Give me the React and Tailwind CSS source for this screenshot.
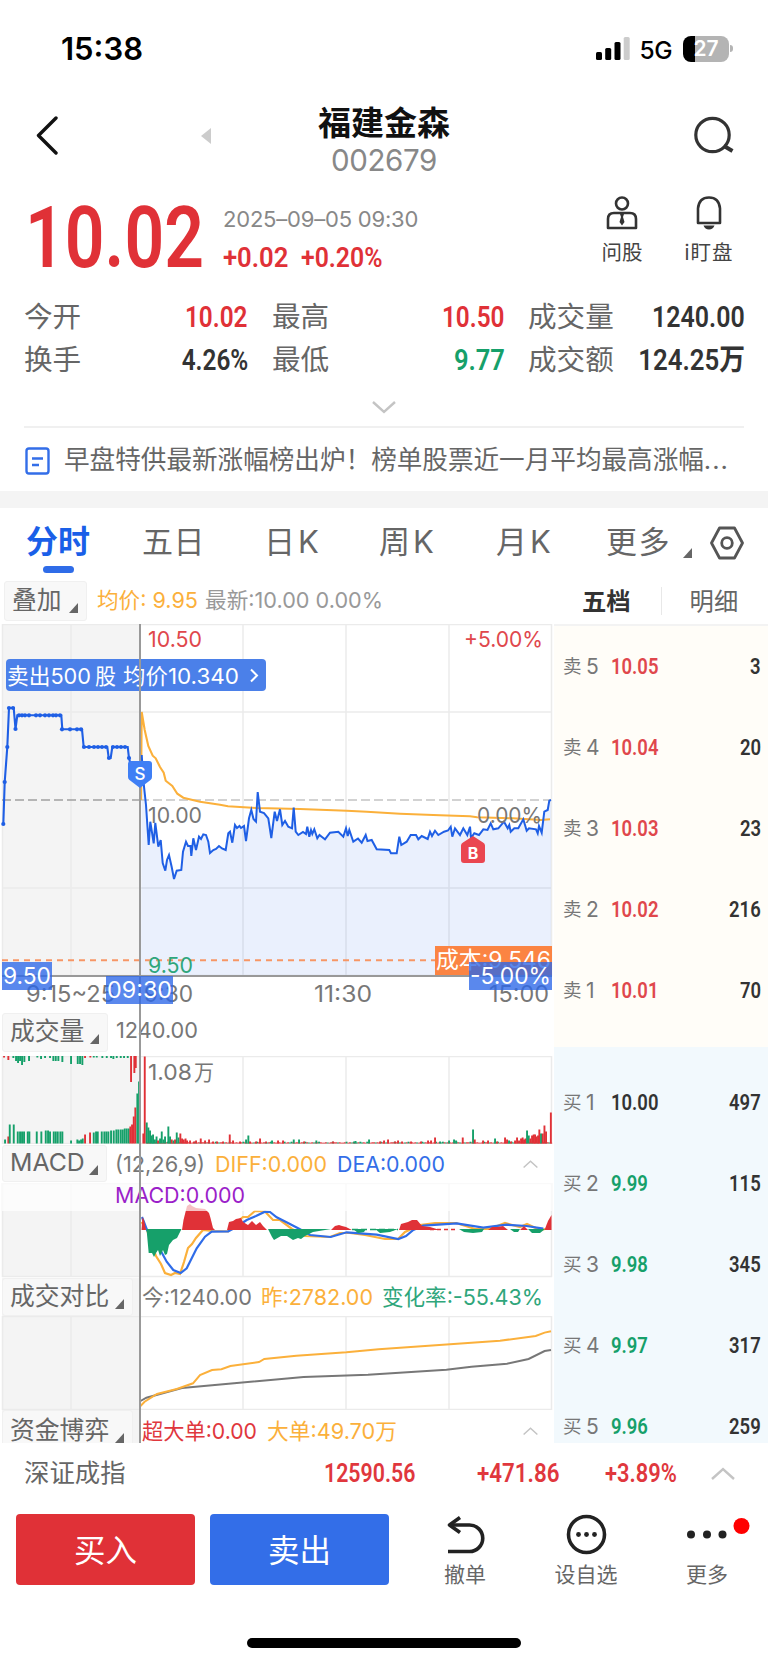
import { clsx } from "clsx";

const stats = [
  [
    { label: "今开", value: "10.02", tone: "text-[#e03137]" },
    { label: "最高", value: "10.50", tone: "text-[#e03137]" },
    { label: "成交量", value: "1240.00", tone: "text-[#333] scale-x-[.86]" },
  ],
  [
    { label: "换手", value: "4.26%", tone: "text-[#333]" },
    { label: "最低", value: "9.77", tone: "text-[#16a06a] scale-x-[.88]" },
    { label: "成交额", value: "124.25万", tone: "text-[#333] scale-x-[.89]" },
  ],
];

const sells = [
  ["5", "10.05", "3"],
  ["4", "10.04", "20"],
  ["3", "10.03", "23"],
  ["2", "10.02", "216"],
  ["1", "10.01", "70"],
];

const buys = [
  ["1", "10.00", "497", "text-[#333]"],
  ["2", "9.99", "115", "text-[#16a06a]"],
  ["3", "9.98", "345", "text-[#16a06a]"],
  ["4", "9.97", "317", "text-[#16a06a]"],
  ["5", "9.96", "259", "text-[#16a06a]"],
];

const auctionLine =
  "3.3,824.5 4.7,782 7.3,747 9,708 13.7,708 15.5,729 17.3,715.3 61.3,715.3 62.3,729.3 82,729.3 83.7,747 107.3,747 108.7,758 110.7,758 112.3,747 127.7,747 129,758 132,770";

const auctionDots = [
  [3.3, 824], [4.7, 782], [7.3, 747], [9, 708], [13, 708], [15.5, 729], [19, 715.3], [22, 715.3], [25, 715.3],
  [29, 715.3], [36, 715.3], [40, 715.3], [45, 715.3], [49, 715.3], [53, 715.3], [56, 715.3], [60, 715.3],
  [62, 729.3], [70, 729.3], [77, 729.3], [81, 729.3], [84, 747], [89, 747], [94, 747], [98, 747], [102, 747],
  [106, 747], [109, 758], [113, 747], [117, 747], [121, 747], [125, 747], [129, 758],
];

const priceLine =
  "141.7,755 144,786.7 146,805 148.7,845 150.3,821.7 153.7,843.3 155.3,823 158.3,846.7 160.7,840 162.7,863 165.3,870.7 167,860 169,855 171.7,867 174,879 176.7,870.7 181.3,870 183,851.7 186,841.7 188,846 190.5,846 191.3,856 193.3,838.3 196,850 199,836.7 201,839 203.3,834.3 206,835 208.3,841.7 210,853 213.3,850 216,849 219,846 222,848.5 225.7,850 228.3,833.3 230,831.7 232.3,842.7 235,825 237,828 239.5,826 241,828 244,826 246,841 249,818.3 251.3,810 253.5,819 256,821.7 257.7,792 260,811.7 264,813 268.3,818.3 271.3,838 274.7,811.7 277,821 280,809.3 282.3,825 285,821 288.3,826.7 292,828.3 293.7,807.5 295.7,831.7 298.3,835 303,832 306,834 307.3,826.7 309.3,836.7 311,830 312.3,834 314.3,829.3 317.3,838.3 319.5,835 322,837 325,839.3 330,832.7 338.3,831.7 343.3,836.7 346,828.3 347.7,836 349.3,830 353.3,841.7 358,838.5 361.7,842.7 365.7,835 367.5,841 371.7,840 376.7,849.3 389.3,850 391,853.3 396.7,853.3 399.3,836.7 401.3,845 406.7,841.7 410.7,835 416,835 418.3,839.3 421.7,836 427.7,839 430,831.7 432,836 435,830.7 438.3,835 444,831.7 448,830.5 450.7,826.7 452.3,836.7 455,828.3 460,835 463.3,828.3 467.3,835 470,826.7 471,838 474.3,833.3 479,835 483.3,829.3 487.5,830 490.7,823.3 493.3,829.3 498.3,828.3 504,821.7 507.7,828.3 509.3,825 510.7,831.7 514.3,828.3 518.3,828.3 523.3,819.3 526.7,830.7 529,828.3 536,829.3 537.7,833.3 539,826 541.7,832.7 544.3,811.7 547.7,810 549.3,800.7 551,800";

const averageLine =
  "141,800 141.7,712 144.7,730 148.3,746 152.7,755.7 155.7,758.3 160,767 163.7,772.7 165.7,780.7 172.3,786 177.3,793.7 183.3,797.7 200,801.7 220,804.7 228,806.3 257,808 300,809 346.7,810.7 366.7,811.7 400,813.7 440,815.3 470,816.3 477,817.3 513,818.3 541,820 550,819.3";

// [x, height], a negative height is a green bar
const auctionBottom = [
  [5, -4], [8.3, 7], [9.7, -19], [13.7, -19], [17.7, -12], [20, -12], [22, -12], [24, -12], [27.7, -12], [29.3, -12],
  [36.7, -12], [41.3, -12], [45.7, -13], [48, -13], [50, -12], [53.7, -12], [55.7, -12], [57.7, -12], [60.3, -12],
  [62.3, -12], [71, -3], [77.3, -4], [79, -3], [81, -4], [82.7, -5], [85, 9], [90, 11], [93.7, -11], [96, -12],
  [97.7, -12], [101.7, -12], [104.3, -12], [106.3, -12], [108.3, -12], [111, -13], [113.7, -13], [116.3, -14],
  [118.3, -14], [120.7, -14], [122.7, -14], [124.7, -15], [126.7, -15], [128.7, -15], [130.3, 17], [132, 19],
  [133.7, 27], [135.3, 36], [137.3, -50], [139, -62],
];

const auctionTop = [
  [4, 1.5], [8.3, 4], [13.3, -2], [16, -5], [18, -7], [20, -5], [22, -9], [24.3, -6], [29, -5], [37.3, -1.5], [41, -3],
  [45, -2], [50, -2], [53.3, -5], [55.7, -5], [58.3, -5], [62.3, -6], [71, -8], [77.7, -8], [80, -8], [82.3, -9],
  [85, 2], [90.3, 1.5], [93.7, -1.5], [96.7, -1.5], [102.3, -2], [106.7, -2], [111, -2], [113.3, -3], [116.7, -2],
  [120.7, -2], [124, -2], [127.7, -2], [131, 26], [134.3, 17], [135.7, 12],
];

const sessionBars = [
  [143.3, 10], [144.7, 87], [146.7, -21], [148.3, -16], [150, -13], [151.5, -8], [153, -9], [154.8, -4], [156.5, -7],
  [158, 3], [160, -5], [161.7, -12], [163.4, -4], [165, -7], [168.3, -17], [170, -7], [171.7, 4], [173.5, -3],
  [175, 4], [176.7, -11], [178.5, -6], [180.3, 10], [182, 5], [183.7, 4], [185.5, 5], [187, 3], [190, 3], [194, 2],
  [196, 3], [200.7, 5], [205, 3], [209, 4], [213, 2], [217, 2], [223, 2], [229.7, 9], [233, 3], [240, 2], [246, -4],
  [248.3, -8], [250, 2], [256, 2], [260, 5], [266, 2], [272, -3], [278, 3], [283, 3], [293.7, -4], [299, -4], [304, 2],
  [316.3, -3], [333, 2], [354, -2], [355.5, -2.5], [369, -4], [380, 2], [384, 3], [388, 4], [395, 2], [398, 3],
  [402, 2], [411, 2], [421, 2], [428, 3], [431, 3], [435, 6], [440, -2], [449, -3], [454, -4], [456, -3], [462.7, 6],
  [473, -14], [474.7, 4], [483, 3], [488, 3], [495, -5], [497, 2], [505, 6], [507, 4], [509, -3], [511, 2], [515, 3],
  [517, 6], [519, 3], [521, 5], [522.6, 6], [524, 4], [525.5, 5], [527, -13], [528.7, -8], [530.3, 5], [532, 8],
  [533.6, 9], [535, 9], [536.6, 7], [538, 8], [539.3, 14], [541, -10], [542.7, 10], [544.4, 18], [546, 12], [550.8, 31],
];

const macdUp = [
  "141.5,1230 142.5,1217 144,1220 146,1230",
  "182,1230 183.5,1220 186,1210 187,1206 190,1204 192,1206 196,1208 205,1209 209,1213 210.5,1218 213,1228 215,1230",
  "227,1230 229,1222 233,1221 236,1219 241,1218 243,1222 248,1225 252,1221 256,1225 260,1222 263,1226 267,1230",
  "331,1230 335,1226 339,1225 342,1226 346,1227 352,1230",
  "399,1230 401,1224 408,1222 412,1220 417,1220 422,1226 430,1227 440,1230",
  "488,1230 492,1227 498,1227 503,1226 508,1230",
  "520,1230 524,1226 528,1230",
  "544.5,1230 548,1221 551.5,1215 551.5,1230",
];

const macdDown = [
  "146.500,1229 148.7,1253 152,1253 154,1257 156,1253 158,1250 160,1256 163,1250 165,1255 167,1254 169,1245 173,1240 177,1238 181.500,1229",
  "268,1229 272,1237 274,1240 281,1236 287,1236 293,1240 298,1238 301,1239 305,1236 313,1232 331,1229",
  "353,1229 358,1233 364,1232 366,1229",
  "375,1229 380,1233 390,1232 398,1229",
  "459,1229 464,1232 473,1233 482,1232 484,1229",
  "510,1229 514,1232 518,1232 520,1229",
  "528,1229 532,1233 540,1233 545,1229",
];

const diffLine =
  "141.5,1222 147,1230 156,1256 161,1264 165,1273 171,1275 175,1273 180,1274 184,1262 188,1248 192,1244 196,1238 203,1230 212,1231 228,1231.5 232,1226 243,1217 248,1217 255,1211 265,1211.5 273,1220 280,1220 292,1229 305,1236 330,1237 340,1233 350,1233 365,1235 385,1239 398,1239 405,1232 420,1225 435,1223 456,1223 475,1229 490,1229 505,1223 520,1227 527,1224 540,1230 545,1229";

const deaLine =
  "142,1217 147,1230 161.3,1251.7 166.7,1261.7 173.3,1270 180.7,1273 186.7,1268.3 196.7,1248.3 205,1236.7 211.7,1231.7 228.3,1231.3 236.7,1226.7 246.7,1220 256,1216 265,1211.7 270,1212 276.7,1217.3 288,1223 300,1229.3 310,1235 330.7,1237 346.7,1232.3 376.7,1234.7 398.3,1239 406,1236 413.3,1230 423.3,1225.7 456.7,1223.3 483.3,1227.7 506.7,1224.7 526.7,1226 543.3,1228.7";

const yesterdayLine =
  "140.5,1406 144.6,1401.7 157,1394 176.8,1389 193,1383.3 200,1375 212,1370 221.4,1369.3 230.4,1366 259,1362 264.3,1359 296.4,1355.7 346.4,1352.3 378.6,1349.3 428.6,1345.7 500,1340.7 535.7,1336 544.6,1332.6 551,1331.3";

const todayLine =
  "140.5,1401 146.4,1397.7 182,1388 228.6,1383.7 303.6,1377 368,1374.7 446.4,1369.7 471.4,1366.7 507,1363.7 528.6,1359 544.6,1351 551,1350";

// narrow DIN-like numerals
function Num({ children, className, right }) {
  return (
    <span
      className={clsx(
        "inline-block font-['Roboto','Noto_Sans_CJK_SC',sans-serif] font-semibold whitespace-nowrap",
        right ? "origin-right" : "origin-left",
        !className?.includes("scale-x-") && "scale-x-[.84]",
        className
      )}
    >
      {children}
    </span>
  );
}

function Corner({ className }) {
  return (
    <svg className={clsx("h-[10px] w-[9px] shrink-0", className)} viewBox="0 0 9 10">
      <path d="M9 0V10H0Z" fill="#666" />
    </svg>
  );
}

function ChevronUp({ className }) {
  return (
    <svg className={className} viewBox="0 0 24 12" fill="none" stroke="#c4c4c4" strokeWidth="2.4">
      <path d="M1 11.5 12 1.5 23 11.5" />
    </svg>
  );
}

function ChartText({ x, y, w, fill, size = 22, children }) {
  return (
    <text x={x} y={y} fill={fill} fontSize={size} textLength={w} lengthAdjust="spacingAndGlyphs">
      {children}
    </text>
  );
}

function Grid({ top, bottom, rows = [] }) {
  return (
    <g stroke="#ebebeb" strokeWidth="1.5" fill="none">
      <rect x="2" y={top} width="138" height={bottom - top} fill="#f4f4f4" stroke="none" />
      {[2.5, 71, 243, 346, 449, 551.5].map((x) => (
        <path key={x} d={`M${x} ${top}V${bottom}`} />
      ))}
      {[top + 0.5, ...rows, bottom - 0.5].map((y) => (
        <path key={y} d={`M2 ${y}H552`} />
      ))}
    </g>
  );
}

function Legend({ children, className, w }) {
  return (
    <svg className={clsx("h-[34px] shrink-0 overflow-visible", className)} width={w} height="34">
      <text y="25" fontSize="22" fill="currentColor" textLength={w} lengthAdjust="spacingAndGlyphs">
        {children}
      </text>
    </svg>
  );
}

function StatusBar() {
  return (
    <div className="flex h-[96px] items-center pl-[61px] pr-[35px]">
      <span className="mt-0.5 text-[31px] font-semibold text-black">15:38</span>
      <svg className="ml-auto mt-px h-[23px] w-[34px]" viewBox="0 0 34 23">
        <rect x="0" y="15" width="6" height="8" rx="1.5" />
        <rect x="9.2" y="11" width="6" height="12" rx="1.5" />
        <rect x="18.5" y="5" width="6" height="18" rx="1.5" />
        <rect x="27.7" y="0" width="6" height="23" rx="1.5" fill="#ccc" />
      </svg>
      <span className="ml-[10px] mt-1 text-[24.5px] font-medium tracking-[-0.5px] text-black">5G</span>
      <div className="ml-[11px] mt-px flex h-[26px] w-[46px] items-center justify-center rounded-[8px] bg-linear-to-r from-black from-27% to-[#b4b4b4] to-27% text-[21px] font-semibold text-white">
        27
      </div>
      <div className="ml-px h-[7px] w-[3px] rounded-r-full bg-[#b4b4b4]" />
    </div>
  );
}

function Header() {
  return (
    <header className="flex h-[88px] items-start pl-[36px] pr-[33px]">
      <svg className="mt-[20px] h-[40px] w-[22px]" viewBox="0 0 22 40" fill="none" stroke="#111" strokeWidth="3.4" strokeLinecap="round" strokeLinejoin="round">
        <path d="M20 2 2.5 19.5 20 37" />
      </svg>
      <svg className="ml-[143px] mt-[32px] h-[16px] w-[10px]" viewBox="0 0 10 16">
        <path d="M10 0V16L0 8Z" fill="#ccc" />
      </svg>
      <div className="ml-[107px] flex w-[132px] flex-col items-center">
        <h1 className="mt-[7px] text-[33px] leading-[40px] font-semibold whitespace-nowrap text-[#111]">福建金森</h1>
        <p className="-mt-px text-[29.5px] leading-[36px] tracking-[-0.4px] text-[#888]">002679</p>
      </div>
      <svg className="ml-auto mt-[19px] h-[40px] w-[42px]" viewBox="0 0 42 40" fill="none" stroke="#333" strokeWidth="3.2">
        <circle cx="19.5" cy="20" r="16.7" />
        <path d="M31 31 39.5 36" strokeWidth="4" />
      </svg>
    </header>
  );
}

function Quote() {
  return (
    <section className="flex h-[93px] pl-[25px] pr-[29px]">
      <div className="w-[198px]">
        <Num className="mt-[10px] scale-x-[.81] text-[86px] leading-[88px] text-[#e03137]">10.02</Num>
      </div>
      <div className="flex w-[370px] flex-col">
        <span className="mt-[20px] text-[22px] leading-[30px] tracking-[-0.2px] text-[#888]">2025–09–05 09:30</span>
        <div className="mt-[7px] flex text-[28.5px] leading-[34px] text-[#e03137]">
          <Num className="w-[78px] scale-x-[.9]">+0.02</Num>
          <Num className="scale-x-[.87]">+0.20%</Num>
        </div>
      </div>
      <div className="mt-[12px] flex w-[58px] flex-col items-center">
        <svg className="h-[34px] w-[32px]" viewBox="0 0 32 34" fill="none" stroke="#333" strokeWidth="2.6">
          <circle cx="16" cy="7.5" r="6" />
          <path d="M2 32V23Q2 17 8 17H24Q30 17 30 23V32Z" strokeLinejoin="round" />
          <path d="M14 18H18L17 21 18.5 26 16 29.5 13.5 26 15 21Z" fill="#333" stroke="none" />
        </svg>
        <span className="mt-[10px] text-[20.5px] leading-[26px] whitespace-nowrap text-[#444]">问股</span>
      </div>
      <div className="ml-[29px] mt-[12px] flex w-[58px] flex-col items-center">
        <svg className="h-[34px] w-[32px]" viewBox="0 0 32 34" fill="none" stroke="#333" strokeWidth="2.6" strokeLinejoin="round">
          <path d="M5 27V12.5Q6 1.500 16 1.500T27 12.5V27Z" />
          <path d="M10.5 29.5H21.5Q20 33.5 16 33.5T10.5 29.5Z" fill="#333" stroke="none" />
        </svg>
        <span className="mt-[10px] text-[20.5px] leading-[26px] tracking-[1px] whitespace-nowrap text-[#444]">i盯盘</span>
      </div>
    </section>
  );
}

function Stats() {
  return (
    <section className="h-[149px] px-6 pt-[18px]">
      {stats.map((row) => (
        <div key={row[0].label} className="grid h-[43px] grid-cols-[224px_257px_240px] items-center">
          {row.map((cell, index) => (
            <div key={cell.label} className={clsx("flex items-center justify-between", index > 0 && (index === 1 ? "pl-[24px]" : "pl-[23px]"))}>
              <span className="text-[28.6px] leading-[40px] whitespace-nowrap text-[#666]">{cell.label}</span>
              <Num right className={clsx("-ml-6 text-[29px] leading-[40px]", cell.tone)}>
                {cell.value}
              </Num>
            </div>
          ))}
        </div>
      ))}
      <ChevronUp className="mx-auto mt-[20px] h-[13px] w-[24px] rotate-180" />
    </section>
  );
}

function Notice() {
  return (
    <section className="mx-6 flex h-[65px] items-center border-t-2 border-[#f0f0f0]">
      <svg className="ml-[1px] mt-[2px] h-[28px] w-[25px]" viewBox="0 0 25 28" fill="none" stroke="#336ee8" strokeWidth="2.4">
        <rect x="1.5" y="1.5" width="22" height="25" rx="2.5" />
        <path d="M7 11.5H18M7 18H14" />
      </svg>
      <p className="ml-[14px] mt-px text-[25.6px] whitespace-nowrap text-[#666]">
        早盘特供最新涨幅榜出炉！榜单股票近一月平均最高涨幅<span className="tracking-[1px]">...</span>
      </p>
    </section>
  );
}

function Tabs() {
  return (
    <nav className="flex h-[70px] pt-[10px] text-[31px] leading-[48px] whitespace-nowrap text-[#666]">
      <div className="ml-[26px] flex w-[116px] flex-col text-[#1a5fe8]">
        <span className="text-[32px] font-semibold">分时</span>
        <span className="ml-[17px] h-[7px] w-[31px] rounded-full bg-[#2f6ce8]" />
      </div>
      <span className="w-[122px] tracking-[0.5px]">五日</span>
      <span className="w-[115px] tracking-[3px]">日K</span>
      <span className="w-[117px] tracking-[3px]">周K</span>
      <span className="w-[110px] tracking-[3px]">月K</span>
      <span className="w-[66px] tracking-[1.5px]">更多</span>
      <Corner className="ml-[11px] mt-[30px]" />
      <svg className="ml-[18px] mt-[8px] h-[34px] w-[34px]" viewBox="0 0 34 34" fill="none" stroke="#555" strokeWidth="2.8" strokeLinejoin="round">
        <path d="M9.5 2H24.5L32.5 17 24.5 32H9.5L1.5 17Z" />
        <circle cx="17" cy="17" r="5.3" />
      </svg>
    </nav>
  );
}

function PriceChart() {
  return (
    <svg className="h-[384px] w-[554px]" viewBox="0 624 554 384">
      <Grid top={624} bottom={976} rows={[712, 888]} />
      <polygon points={`${priceLine} 551,976 141,976`} fill="#2f6ce8" fillOpacity="0.1" />
      <path d="M2 800H140" stroke="#a0a0a0" strokeWidth="1.6" strokeDasharray="9 4" />
      <path d="M140 800H551" stroke="#c4c4c4" strokeWidth="1.6" strokeDasharray="9 4" />
      <path d="M2 960.3H436" stroke="#f79665" strokeWidth="2" strokeDasharray="6 5" />
      <path d="M2 976H552" stroke="#999" strokeWidth="2" />
      <ChartText x={148} y={646.5} w={54} fill="#e0474c">10.50</ChartText>
      <ChartText x={464} y={646.5} w={79} fill="#e0474c">+5.00%</ChartText>
      <ChartText x={148} y={822.5} w={54} fill="#777">10.00</ChartText>
      <ChartText x={148} y={973} w={45} fill="#2fa67b">9.50</ChartText>
      <g fill="#1f5fe5">
        {auctionDots.map(([x, y]) => (
          <circle key={`${x}-${y}`} cx={x} cy={y} r="2.1" />
        ))}
      </g>
      <polyline points={auctionLine} fill="none" stroke="#1f5fe5" strokeWidth="2.1" />
      <polyline points={averageLine} fill="none" stroke="#fbb03b" strokeWidth="2.1" />
      <polyline points={priceLine} fill="none" stroke="#1f5fe5" strokeWidth="2" />
      <ChartText x={477} y={822.5} w={65} fill="#777">0.00%</ChartText>
      <path d="M461 845.5Q461 843.5 463 842.5L473 836 483 842.5Q485 843.5 485 845.5V860Q485 863 482 863H464Q461 863 461 860Z" fill="#ea4650" />
      <text x="473" y="859" fill="#fff" fontSize="16" fontWeight="700" textAnchor="middle">B</text>

      <ChartText x={26} y={1002} w={89} fill="#777" size={23}>9:15~25</ChartText>
      <ChartText x={144} y={1002} w={49} fill="#777" size={23}>9:30</ChartText>
      <ChartText x={314} y={1002} w={58} fill="#777" size={23}>11:30</ChartText>
      <ChartText x={489} y={1002} w={60} fill="#777" size={23}>15:00</ChartText>

      <rect x="435" y="946" width="117" height="29" fill="#fb8443" />
      <ChartText x={436} y={968} w={115} fill="#fff" size={22.5}>成本:9.546</ChartText>
      <rect x="6" y="659" width="260" height="32" rx="4" fill="#4b80e9" />
      <ChartText x={7} y={683.5} w={84} fill="#fff">卖出500</ChartText>
      <ChartText x={95} y={683.5} w={21} fill="#fff">股</ChartText>
      <ChartText x={123} y={683.5} w={116} fill="#fff">均价10.340</ChartText>
      <path d="M251 669.5 257 675.5 251 681.5" fill="none" stroke="#fff" strokeWidth="2" />
    </svg>
  );
}

// readouts that follow the crosshair
function Crosshair() {
  return (
    <svg className="pointer-events-none absolute left-0 top-0 h-[819px] w-[554px]" viewBox="0 624 554 819">
      <path d="M140 624V1443" stroke="#999" strokeWidth="2" />
      <path d="M128 764Q128 761 131 761H149Q152 761 152 764V777Q152 779 150.500 780L140 788 129.500 780Q128 779 128 777Z" fill="#3f7ff5" />
      <text x="140" y="779.5" fill="#fff" fontSize="17" fontWeight="500" textAnchor="middle">S</text>
      <g fill="#2b67e8" fillOpacity="0.78">
        <rect x="2" y="962" width="50" height="28" />
        <rect x="106" y="976" width="67" height="28" />
        <rect x="469" y="962" width="83" height="28" />
      </g>
      <ChartText x={3} y={984} w={48} fill="#fff" size={23}>9.50</ChartText>
      <ChartText x={107} y={998} w={65} fill="#fff" size={23}>09:30</ChartText>
      <ChartText x={470} y={984} w={81} fill="#fff" size={23}>-5.00%</ChartText>
    </svg>
  );
}

function Bars({ data, base, down }) {
  return data.map(([x, h]) => (
    <rect
      key={`${base}-${x}`}
      x={x - 0.9}
      y={down ? base : base - Math.abs(h)}
      width="1.9"
      height={Math.abs(h)}
      fill={h > 0 ? "#e03137" : "#16a06a"}
    />
  ));
}

function VolumeChart() {
  const floor = Array.from({ length: 236 }, (_, i) => [
    147 + i * 1.72,
    (i * 7) % 11 < 5 ? 1.2 : i % 4 === 0 ? -1.8 : (i * 5) % 7 < 3 ? -1 : 0.8,
  ]);

  return (
    <svg className="h-[88px] w-[554px]" viewBox="0 1056 554 88">
      <Grid top={1056} bottom={1144} />
      <Bars data={auctionTop} base={1056} down />
      <Bars data={auctionBottom} base={1143.5} />
      <Bars data={floor} base={1143.5} />
      <Bars data={sessionBars} base={1143.5} />
      <ChartText x={148} y={1080} w={44} fill="#777">1.08</ChartText>
      <ChartText x={194} y={1080} w={20} fill="#777">万</ChartText>
    </svg>
  );
}

function MacdChart() {
  return (
    <svg className="h-[95px] w-[554px]" viewBox="0 1183 554 95">
      <Grid top={1183} bottom={1277} />
      <polyline points={diffLine} fill="none" stroke="#fbb03b" strokeWidth="2.2" />
      <polyline points={deaLine} fill="none" stroke="#2f6ce8" strokeWidth="2.2" />
      <path d="M430 1229.500H458" stroke="#e03137" strokeWidth="1.4" strokeDasharray="4 3" />
      <path d="M352 1229.500H398" stroke="#16a06a" strokeWidth="1.4" strokeDasharray="6 3" />
      {macdUp.map((points) => (
        <polygon key={points} points={points} fill="#e03137" />
      ))}
      {macdDown.map((points) => (
        <polygon key={points} points={points} fill="#16a06a" />
      ))}
      <rect x="2" y="1183" width="550" height="28" fill="#fff" fillOpacity="0.7" />
      <ChartText x={115} y={1203} w={130} fill="#9b1fc9">MACD:0.000</ChartText>
    </svg>
  );
}

function CompareChart() {
  return (
    <svg className="h-[94px] w-[554px]" viewBox="0 1316 554 94">
      <Grid top={1316} bottom={1410} />
      <polyline points={todayLine} fill="none" stroke="#777" strokeWidth="2" />
      <polyline points={yesterdayLine} fill="none" stroke="#fbb03b" strokeWidth="2" />
    </svg>
  );
}

function IndicatorButton({ children, className }) {
  return (
    <button className={clsx("flex shrink-0 items-center rounded-[3px] border border-[#f0f0f0] bg-[#f8f8f8] pr-[8px] pl-[7px] text-[24.8px] leading-none whitespace-nowrap text-[#666]", className)}>
      <span className="-mt-[2px]">{children}</span>
      <Corner className="ml-auto mt-[13px]" />
    </button>
  );
}

function OrderRow({ side, level, price, amount, tone }) {
  return (
    <div className="flex h-[81px] items-center pl-[9px] pr-[7px]">
      <span className="w-[23px] text-[18.5px] text-[#777]">{side}</span>
      <span className="w-[25px] text-[21px] text-[#777]">{level}</span>
      <Num className={clsx("text-[22px]", tone)}>{price}</Num>
      <Num right className="ml-auto text-[22px] text-[#333]">
        {amount}
      </Num>
    </div>
  );
}

function OrderBook() {
  return (
    <aside className="flex w-[214px] flex-col">
      <div className="flex h-[48px] items-center border-b-2 border-[#f3f3f3] text-[24.3px] whitespace-nowrap text-[#666]">
        <span className="ml-[28px] font-bold text-[#333]">五档</span>
        <span className="ml-[30px] h-[28px] w-px bg-[#e8e8e8]" />
        <span className="ml-[28px]">明细</span>
      </div>
      <div className="h-[421px] bg-[#fffdf8]">
        {sells.map(([level, price, amount]) => (
          <OrderRow key={level} side="卖" level={level} price={price} amount={amount} tone="text-[#e0474c]" />
        ))}
      </div>
      <div className="h-[396px] overflow-hidden bg-[#f2f9fd] pt-[15px]">
        {buys.map(([level, price, amount, tone]) => (
          <OrderRow key={level} side="买" level={level} price={price} amount={amount} tone={tone} />
        ))}
      </div>
    </aside>
  );
}

function Charts() {
  return (
    <div className="w-[554px]">
      <div className="flex h-[46px] items-center">
        <IndicatorButton className="ml-[4px] h-[40px] w-[83px]">叠加</IndicatorButton>
        <Legend className="ml-[10px] -mt-[2px] text-[#fbb03b]" w={101}>均价: 9.95</Legend>
        <Legend className="ml-[7px] -mt-[2px] text-[#999]" w={178}>最新:10.00 0.00%</Legend>
      </div>
      <div className="relative h-[819px] overflow-hidden">
        <PriceChart />
        <div className="flex h-[48px] items-center">
          <IndicatorButton className="ml-[2px] h-[39px] w-[106px]">成交量</IndicatorButton>
          <Legend className="ml-[8px] -mt-1 text-[#777]" w={82}>1240.00</Legend>
        </div>
        <VolumeChart />
        <div className="flex h-[39px] items-center">
          <IndicatorButton className="ml-[2px] h-[37px] w-[105px]">MACD</IndicatorButton>
          <Legend className="ml-[8px] text-[#777]" w={90}>(12,26,9)</Legend>
          <Legend className="ml-[10px] text-[#fbb03b]" w={112}>DIFF:0.000</Legend>
          <Legend className="ml-[10px] text-[#336ee8]" w={108}>DEA:0.000</Legend>
          <ChevronUp className="ml-[78px] h-[8px] w-[15px]" />
        </div>
        <MacdChart />
        <div className="flex h-[38px] items-center">
          <div className="ml-[2px] w-[138px] bg-[#f4f4f4]">
            <IndicatorButton className="h-[38px] w-[131px]">成交对比</IndicatorButton>
          </div>
          <Legend className="ml-[2px] text-[#777]" w={110}>今:1240.00</Legend>
          <Legend className="ml-[9px] text-[#fbb03b]" w={112}>昨:2782.00</Legend>
          <Legend className="ml-[9px] text-[#2fa67b]" w={161}>变化率:-55.43%</Legend>
        </div>
        <CompareChart />
        <div className="flex h-[42px] items-center">
          <div className="ml-[2px] w-[138px] bg-[#f4f4f4]">
            <IndicatorButton className="h-[42px] w-[131px]">资金博弈</IndicatorButton>
          </div>
          <Legend className="ml-[2px] text-[#e0373d]" w={115}>超大单:0.00</Legend>
          <Legend className="ml-[10px] text-[#fbb03b]" w={130}>大单:49.70万</Legend>
          <ChevronUp className="ml-[126px] h-[8px] w-[15px]" />
        </div>
        <Crosshair />
      </div>
    </div>
  );
}

function IndexBar() {
  return (
    <section className="flex h-[61px] items-center pl-6 pr-[33px] text-[26px] text-[#e0373d]">
      <span className="w-[300px] text-[25.4px] text-[#666]">深证成指</span>
      <Num className="w-[153px] scale-x-[.82]">12590.56</Num>
      <Num className="w-[128px] scale-x-[.86]">+471.86</Num>
      <Num>+3.89%</Num>
      <ChevronUp className="ml-auto h-[13px] w-[24px]" />
    </section>
  );
}

function Action({ label, children, className }) {
  return (
    <div className={clsx("flex w-[66px] flex-col items-center", className)}>
      <svg className="h-[42px] w-[66px] overflow-visible" viewBox="0 0 66 42">
        {children}
      </svg>
      <span className="mt-[6px] text-[21px] leading-[26px] whitespace-nowrap text-[#666]">{label}</span>
    </div>
  );
}

function ActionBar() {
  return (
    <footer className="flex h-[161px] flex-col">
      <div className="flex items-start pl-4 pt-[10px]">
        <button className="h-[71px] w-[179px] rounded-[4px] bg-[#e03137] pt-[3px] text-[31.5px] text-white">买入</button>
        <button className="ml-[15px] h-[71px] w-[179px] rounded-[4px] bg-[#336ee8] pt-[3px] text-[31.5px] text-white">卖出</button>
        <Action label="撤单" className="ml-[43px]">
          <g fill="none" stroke="#222" strokeWidth="3.6" strokeLinejoin="round">
            <path d="M17 11H37.500A13.250 13.250 0 0 1 37.500 37.500H16" />
            <path d="M28 3.500 17.500 11 28 18.500" />
          </g>
        </Action>
        <Action label="设自选" className="ml-[55px]">
          <circle cx="33.500" cy="20.500" r="18" fill="none" stroke="#222" strokeWidth="3.6" />
          {[25.5, 33.5, 41.5].map((x) => (
            <circle key={x} cx={x} cy="20.500" r="2.400" fill="#222" />
          ))}
        </Action>
        <Action label="更多" className="ml-[55px]">
          {[17, 33, 48.5].map((x) => (
            <circle key={x} cx={x} cy="20.500" r="4" fill="#222" />
          ))}
          <circle cx="67.500" cy="12" r="8" fill="#f00" />
        </Action>
      </div>
      <div className="mx-auto mt-[50px] h-[10px] w-[274px] rounded-full bg-black" />
    </footer>
  );
}

function App() {
  return (
    <main className="h-[1665px] w-[768px] overflow-hidden bg-white font-['Inter','Noto_Sans_CJK_SC',sans-serif]">
      <StatusBar />
      <Header />
      <Quote />
      <Stats />
      <Notice />
      <div className="h-[17px] bg-[#f4f4f4]" />
      <Tabs />
      <div className="flex h-[865px]">
        <Charts />
        <OrderBook />
      </div>
      <IndexBar />
      <ActionBar />
    </main>
  );
}

export default App;
